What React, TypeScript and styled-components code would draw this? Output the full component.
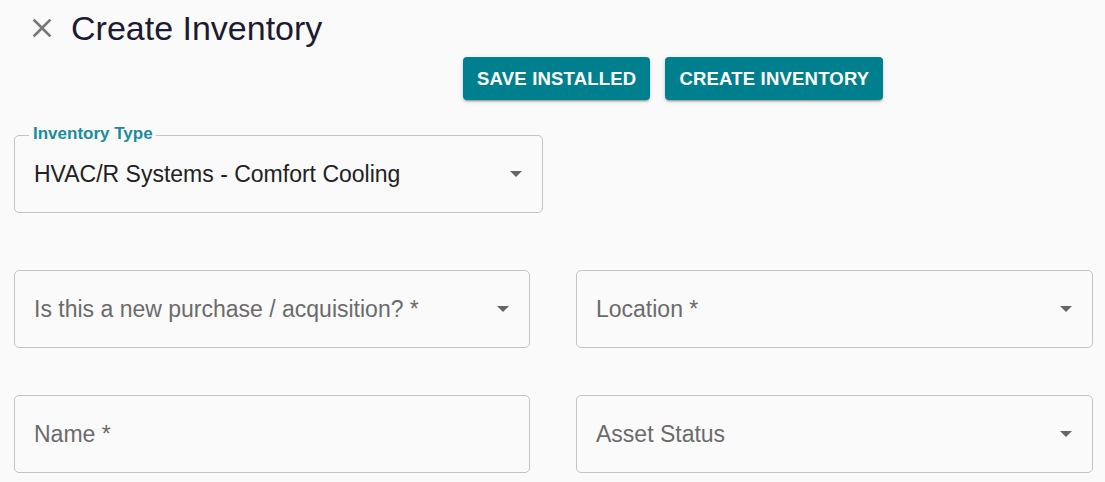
import React from "react"
import styled, { createGlobalStyle } from "styled-components"

const GlobalStyle = createGlobalStyle`
    body {
        margin: 0;
        background: #fafafa;
        font-family: "Liberation Sans", Arial, Helvetica, sans-serif;
    }
`

const Page = styled.div`
    padding: 0 12px 0 14px;
    width: 1079px;
`

const Header = styled.div`
    display: flex;
    align-items: center;
    height: 56px;
    padding-left: 12px;
`

const CloseButton = styled.div`
    width: 32px;
    height: 32px;
    margin-right: 13px;
    display: flex;
    cursor: pointer;
`

const Title = styled.h1`
    margin: 0;
    font-family: "Liberation Sans", Arial, sans-serif;
    font-size: 34px;
    font-weight: 400;
    color: #1c1b33;
    line-height: 1;
    padding-bottom: 1px;
`

const Toolbar = styled.div`
    display: flex;
    gap: 15px;
    margin-left: 449px;
    margin-top: 1px;
`

const Button = styled.button`
    height: 43px;
    padding: 0 14px;
    border: none;
    border-radius: 4px;
    background: #00808f;
    color: #fff;
    font-family: "Liberation Sans", Arial, sans-serif;
    font-weight: 700;
    font-size: 18.5px;
    letter-spacing: 0.2px;
    text-transform: uppercase;
    box-shadow: 0px 3px 1px -2px rgba(0,0,0,0.2), 0px 2px 2px 0px rgba(0,0,0,0.14), 0px 1px 5px 0px rgba(0,0,0,0.12);
    cursor: pointer;
`

const TypeRow = styled.div`
    margin-top: 35px;
    width: 529px;
`

const Grid = styled.div`
    display: grid;
    grid-template-columns: 516px 517px;
    column-gap: 46px;
    row-gap: 47px;
    margin-top: 57px;
`

const Field = styled.div`
    position: relative;
    box-sizing: border-box;
    height: 78px;
    border: 1.5px solid #c4c4c4;
    border-radius: 5px;
    background: #fafafa;
    display: flex;
    align-items: center;
    padding: 0 20px 0 19px;
`

const FloatLabel = styled.span`
    position: absolute;
    top: -12px;
    left: 14px;
    padding: 0 3px 0 4px;
    background: #fafafa;
    color: #1a8c9f;
    font-family: "Liberation Sans", Arial, sans-serif;
    font-weight: 700;
    font-size: 17px;
    line-height: 20px;
`

const Value = styled.span<{ $placeholder?: boolean }>`
    flex: 1;
    font-family: "Liberation Sans", Arial, sans-serif;
    font-size: 23px;
    color: ${p => (p.$placeholder ? "#6b6b6b" : "#222")};
    white-space: nowrap;
`

const Arrow = styled.span`
    width: 0;
    height: 0;
    border-left: 6.5px solid transparent;
    border-right: 6.5px solid transparent;
    border-top: 6.5px solid #666;
`

const CloseIcon = () => (
    <svg width="32" height="32" viewBox="0 0 24 24">
        <path
            fill="#777"
            d="M19 6.41L17.59 5 12 10.59 6.41 5 5 6.41 10.59 12 5 17.59 6.41 19 12 13.41 17.59 19 19 17.59 13.41 12z"
        />
    </svg>
)

interface InputProps {
    label?: string
    value?: string
    placeholder?: string
    select?: boolean
}

const Input = ({ label, value, placeholder, select }: InputProps) => (
    <Field>
        {label && <FloatLabel>{label}</FloatLabel>}
        <Value $placeholder={!value}>{value || placeholder}</Value>
        {select && <Arrow />}
    </Field>
)

export default function App() {
    return (
        <Page>
            <GlobalStyle />
            <Header>
                <CloseButton>
                    <CloseIcon />
                </CloseButton>
                <Title>Create Inventory</Title>
            </Header>
            <Toolbar>
                <Button>Save Installed</Button>
                <Button>Create Inventory</Button>
            </Toolbar>
            <TypeRow>
                <Input label="Inventory Type" value="HVAC/R Systems - Comfort Cooling" select />
            </TypeRow>
            <Grid>
                <Input placeholder="Is this a new purchase / acquisition? *" select />
                <Input placeholder="Location *" select />
                <Input placeholder="Name *" />
                <Input placeholder="Asset Status" select />
            </Grid>
        </Page>
    )
}
